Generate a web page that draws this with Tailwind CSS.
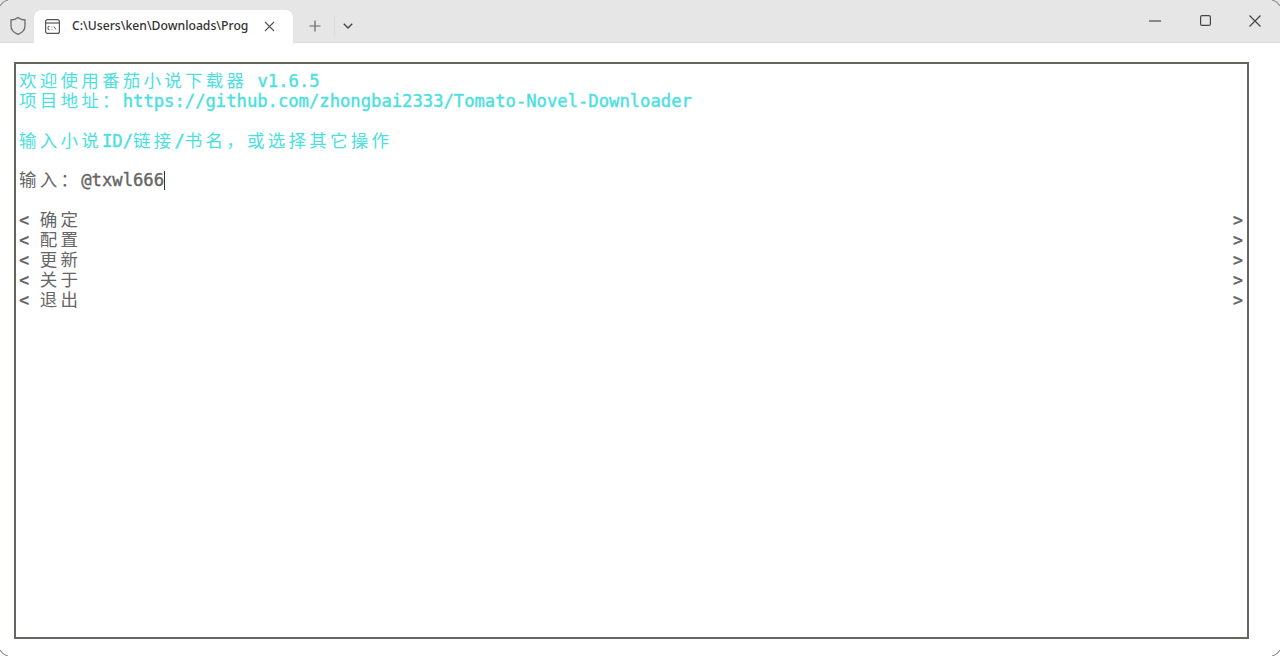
<!DOCTYPE html>
<html lang="zh">
<head>
  <meta charset="UTF-8" />
  <title>Terminal</title>
  <script src="https://cdn.jsdelivr.net/npm/@tailwindcss/browser@4"></script>
</head>
<body class="bg-white overflow-hidden">
  <div class="relative flex flex-col w-[1280px] h-[656px] bg-white overflow-hidden">
    <!-- Tab bar -->
    <header class="flex h-[43px] bg-[#e6e6e6] border-b border-[#dcdcdc] font-['Noto_Sans','Inter',sans-serif] text-[#333]">
      <div class="w-[34px] flex items-center justify-center pt-[9px] pl-[2px]">
        <svg width="18" height="20" viewBox="0 0 18 20" fill="none" stroke="#6b6b6b" stroke-width="1.3"><path d="M9 1.5c2 1.6 4.400 2.400 7 2.500v6c0 4-2.800 6.700-7 8.300-4.200-1.600-7-4.300-7-8.300v-6c2.600-.1 5-.9 7-2.500z"/></svg>
      </div>
      <div class="mt-[10px] w-[259px] h-[33px] bg-white rounded-t-lg flex items-center pl-[11px] pr-[18px]">
        <svg width="15" height="15" viewBox="0 0 15 15" fill="none" stroke="#555" stroke-width="1.200"><rect x="0.600" y="0.600" width="13.800" height="13.800" rx="2"/><path d="M1 4h13"/><path d="M4.500 7.500h-1.500v3h1.500M7 7.500v.8M7 10v.6M9 7.500l2 3" stroke-width="0.900"/></svg>
        <span class="ml-[12px] flex-1 text-[12.2px] font-medium whitespace-nowrap overflow-hidden">C:\Users\ken\Downloads\Prog</span>
        <svg width="11" height="11" viewBox="0 0 11 11" stroke="#555" stroke-width="1.100"><path d="M1 1l9 9M10 1l-9 9"/></svg>
      </div>
      <div class="w-[44px] flex items-center justify-center pt-[9px]">
        <svg width="12" height="12" viewBox="0 0 12 12" stroke="#666" stroke-width="1.200"><path d="M6 .5v11M.5 6h11"/></svg>
      </div>
      <div class="w-px h-[20px] mt-[17px] bg-[#dedede] -ml-[3px]"></div>
      <div class="w-[26px] flex items-center justify-center pt-[10px]">
        <svg width="10" height="6" viewBox="0 0 10 6" fill="none" stroke="#444" stroke-width="1.400"><path d="M.8.800L5 5l4.200-4.200"/></svg>
      </div>
      <div class="flex-1"></div>
      <div class="flex items-center h-[42px] pb-[1px]">
        <div class="w-[50px] flex justify-center"><svg width="12" height="2" viewBox="0 0 12 2"><path d="M0 1h12" stroke="#555" stroke-width="1.300"/></svg></div>
        <div class="w-[50px] flex justify-center"><svg width="11" height="11" viewBox="0 0 11 11" fill="none"><rect x=".6" y=".6" width="9.800" height="9.800" rx="1.500" stroke="#444" stroke-width="1.200"/></svg></div>
        <div class="w-[50px] flex justify-center"><svg width="12" height="12" viewBox="0 0 12 12" stroke="#444" stroke-width="1.200"><path d="M.5.500l11 11M11.500.500l-11 11"/></svg></div>
      </div>
    </header>

    <!-- Terminal body -->
    <main class="flex-1 pt-[19px] pl-[14px] pr-[31px] pb-[17px]">
      <div class="h-full border-2 border-[#66665e] pt-[8px] pl-[3px] pr-[3px] font-['DejaVu_Sans_Mono','Noto_Sans_CJK_SC',monospace] text-[17.2px] leading-[19.9px] whitespace-nowrap text-[#666]">
        <div class="h-[19.9px] text-[#4be0e0]"><span class="text-[17.5px] tracking-[3.240px]">欢迎使用番茄小说下载器</span> <span class="[-webkit-text-stroke:0.4px]">v1.6.5</span></div>
        <div class="h-[19.9px] text-[#4be0e0]"><span class="text-[17.5px] tracking-[3.240px]">项目地址：</span><span class="[-webkit-text-stroke:0.4px]">https://github.com/zhongbai2333/Tomato-Novel-Downloader</span></div>
        <div class="h-[19.9px]"></div>
        <div class="h-[19.9px] text-[#4be0e0]"><span class="text-[17.5px] tracking-[3.240px]">输入小说</span><span class="[-webkit-text-stroke:0.4px]">ID/</span><span class="text-[17.5px] tracking-[3.240px]">链接</span><span class="[-webkit-text-stroke:0.4px]">/</span><span class="text-[17.5px] tracking-[3.240px]">书名，或选择其它操作</span></div>
        <div class="h-[19.9px]"></div>
        <div class="h-[19.9px] flex"><span class="text-[17.5px] tracking-[3.240px]">输入：</span><span class="[-webkit-text-stroke:0.4px]">@txwl666</span><span class="w-px h-[19px] bg-[#333]"></span></div>
        <div class="h-[19.9px]"></div>
        <div class="h-[19.9px] flex justify-between pr-[1px]"><span><b>&lt;</b> <span class="text-[17.5px] tracking-[3.240px]">确定</span></span><b>&gt;</b></div>
        <div class="h-[19.9px] flex justify-between pr-[1px]"><span><b>&lt;</b> <span class="text-[17.5px] tracking-[3.240px]">配置</span></span><b>&gt;</b></div>
        <div class="h-[19.9px] flex justify-between pr-[1px]"><span><b>&lt;</b> <span class="text-[17.5px] tracking-[3.240px]">更新</span></span><b>&gt;</b></div>
        <div class="h-[19.9px] flex justify-between pr-[1px]"><span><b>&lt;</b> <span class="text-[17.5px] tracking-[3.240px]">关于</span></span><b>&gt;</b></div>
        <div class="h-[19.9px] flex justify-between pr-[1px]"><span><b>&lt;</b> <span class="text-[17.5px] tracking-[3.240px]">退出</span></span><b>&gt;</b></div>
      </div>
    </main>

    <!-- Window corners -->
    <svg class="absolute left-0 top-0" width="10" height="8" viewBox="0 0 10 8" fill="none"><path d="M0 6C1.500 3.500 4 1 8 0" stroke="#8a8a8a" stroke-width="1.200"/></svg>
    <svg class="absolute right-0 top-0" width="10" height="8" viewBox="0 0 10 8" fill="none"><path d="M10 6C8.500 3.500 6 1 2 0" stroke="#8a8a8a" stroke-width="1.200"/></svg>
    <svg class="absolute left-0 bottom-0" width="10" height="8" viewBox="0 0 10 8" fill="none"><path d="M0 2C1.500 4.500 4 7 8 8" stroke="#8a8a8a" stroke-width="1.200"/></svg>
    <svg class="absolute right-0 bottom-0" width="10" height="8" viewBox="0 0 10 8" fill="none"><path d="M10 2C8.500 4.500 6 7 2 8" stroke="#8a8a8a" stroke-width="1.200"/></svg>
  </div>
</body>
</html>
